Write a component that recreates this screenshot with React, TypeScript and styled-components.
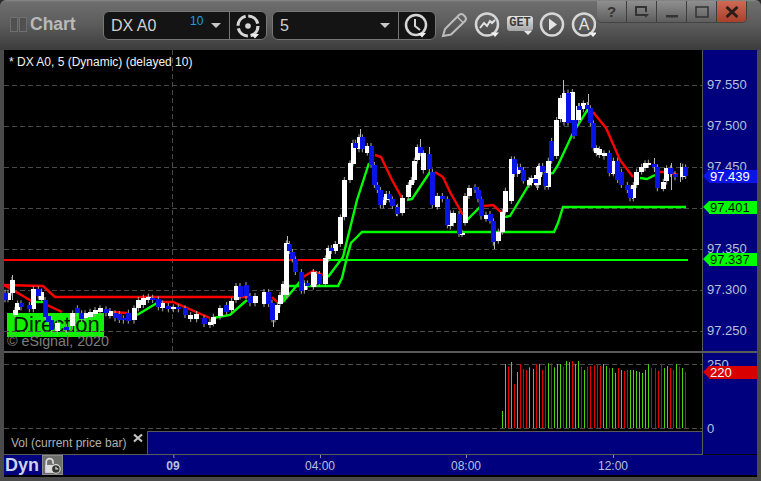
import styled, { createGlobalStyle } from "styled-components";

const GlobalStyle = createGlobalStyle`
  html, body {
    margin: 0;
    padding: 0;
    background: #2b2b2b;
    overflow: hidden;
  }
`;

const Window = styled.div`
  width: 761px;
  height: 481px;
  box-sizing: border-box;
  display: flex;
  flex-direction: column;
  padding: 0 4px 4px;
  border-radius: 6px 6px 0 0;
  background: #4a4a4a;
  font-family: "Liberation Sans", Arial, sans-serif;
  overflow: hidden;
`;

const TitleBar = styled.div`
  position: relative;
  height: 50px;
  flex: none;
  margin: 0 -4px;
  padding: 11px 0 0 10px;
  box-sizing: border-box;
  display: flex;
  align-items: flex-start;
  background: linear-gradient(#8a8a8a 0, #6e6e6e 2px, #5c5c5c 24px, #3c3c3c 50px);
`;

const Grip = styled.div`
  display: flex;
  gap: 1px;
  margin: 6px 3px 0 0;
`;

const GripBar = styled.div`
  width: 6px;
  height: 13px;
  border: 1px solid #6f6f6f;
  background: #505050;
`;

const Title = styled.div`
  width: 73px;
  margin-top: 3px;
  font-size: 17.5px;
  line-height: 20px;
  font-weight: bold;
  color: #b9b9b9;
`;

const Combo = styled.div`
  width: 164px;
  height: 29px;
  box-sizing: border-box;
  margin-right: 5px;
  display: flex;
  align-items: stretch;
  background: #141414;
  border: 1px solid #777;
  border-radius: 6px;
`;

const ComboField = styled.div`
  position: relative;
  width: 126px;
  flex: none;
  padding-left: 7px;
  box-sizing: border-box;
  font-size: 16px;
  line-height: 27px;
  color: #d0d0d0;
  border-right: 1px solid #777;
`;

const Delay = styled.span`
  position: absolute;
  left: 86px;
  top: -4px;
  font-size: 12px;
  color: #1d9be8;
`;

const Caret = styled.span`
  position: absolute;
  right: 8px;
  top: 11px;
  border-left: 5px solid transparent;
  border-right: 5px solid transparent;
  border-top: 5px solid #c8c8c8;
`;

const ComboIcon = styled.div`
  flex: 1;
  display: flex;
  align-items: center;
  justify-content: center;
`;

const Tools = styled.div`
  display: flex;
  gap: 6px;
  margin-left: 0;
  padding-top: 1px;
`;

const GetBox = styled.div`
  position: relative;
  width: 26px;
  height: 26px;
`;

const GetLabel = styled.div`
  position: absolute;
  left: 0;
  top: 4px;
  width: 26px;
  height: 15px;
  border-radius: 3px;
  background: linear-gradient(#e4e4e4, #a4a4a4);
  color: #3c3c3c;
  font-family: "Liberation Mono", monospace;
  font-size: 12px;
  font-weight: bold;
  line-height: 15px;
  text-align: center;
`;

const GetCaret = styled.span`
  position: absolute;
  left: 17px;
  top: 19px;
  border-left: 4px solid transparent;
  border-right: 4px solid transparent;
  border-top: 4px solid #e8e8e8;
`;

const WindowButtons = styled.div`
  position: absolute;
  left: 597px;
  top: 1px;
  display: flex;
  height: 21px;
  border-radius: 0 0 5px 5px;
  overflow: hidden;
  box-shadow: 0 1px 0 #444;
`;

const WindowButton = styled.div<{ $close?: boolean }>`
  width: 30px;
  box-sizing: border-box;
  display: flex;
  align-items: center;
  justify-content: center;
  border-right: 1px solid #3e3e3e;
  background: ${({ $close }) =>
    $close
      ? "linear-gradient(#cf6a55, #a8402c)"
      : "linear-gradient(#8f8f8f, #5e5e5e)"};
  color: #333;
  font-size: 15px;
  font-weight: bold;
`;

const Board = styled.div`
  flex: 1;
  display: grid;
  grid-template-columns: 698px 1px 54px;
  grid-template-rows: 301px 2px 78px 23px 1px 20px;
  background: #000;
`;

const Pane = styled.div<{ $row: string }>`
  position: relative;
  grid-column: 1;
  grid-row: ${({ $row }) => $row};
  background: #000;
  overflow: hidden;
`;

const PaneSvg = styled.svg`
  position: relative;
  display: block;
`;

const Header = styled.div`
  position: absolute;
  left: 5px;
  top: 5px;
  font-size: 12px;
  line-height: 14px;
  color: #f2f2f2;
`;

const DirectionTag = styled.div`
  position: absolute;
  left: 3px;
  top: 263px;
  width: 97px;
  height: 24px;
  padding-left: 6px;
  box-sizing: border-box;
  background: #10f000;
  color: #021502;
  font-size: 22px;
  line-height: 24px;
`;

const Copyright = styled.div`
  position: absolute;
  left: 3px;
  top: 283px;
  font-size: 14.3px;
  line-height: 16px;
  color: #7d7d7d;
`;

const AxisRule = styled.div<{ $row: string }>`
  grid-column: 2;
  grid-row: ${({ $row }) => $row};
  background: #5a5a5a;
`;

const Axis = styled.div<{ $row: string }>`
  position: relative;
  grid-column: 3;
  grid-row: ${({ $row }) => $row};
  background: #00007f;
  overflow: hidden;
`;

const Divider = styled.div`
  grid-column: 1 / 4;
  grid-row: 2;
  background: #5a5a5a;
`;

const AxisTick = styled.div.attrs<{ $y: number }>(({ $y }) => ({
  style: { top: $y },
}))<{ $y: number }>`
  position: absolute;
  left: 4px;
  font-size: 13px;
  line-height: 14px;
  color: #b7c0dc;
`;

const Badge = styled.div.attrs<{ $y: number }>(({ $y }) => ({
  style: { top: $y },
}))<{ $y: number; $bg: string; $fg: string }>`
  position: absolute;
  left: 6px;
  right: 0;
  height: 13px;
  padding-left: 0;
  background: ${({ $bg }) => $bg};
  color: ${({ $fg }) => $fg};
  font-size: 13px;
  line-height: 13px;
  text-indent: 1px;

  &::before {
    content: "";
    position: absolute;
    left: -6px;
    top: 0;
    border-top: 6.5px solid transparent;
    border-bottom: 6.5px solid transparent;
    border-right: 6px solid ${({ $bg }) => $bg};
  }
`;

const LegendRow = styled.div`
  grid-column: 1;
  grid-row: 4;
  display: flex;
`;

const Legend = styled.div`
  position: relative;
  width: 143px;
  flex: none;
  padding-left: 7px;
  box-sizing: border-box;
  background: #000;
  font-size: 12px;
  line-height: 24px;
  color: #b0b0b0;
`;

const LegendClose = styled.span`
  position: absolute;
  left: 129px;
  top: 2px;
  display: flex;
`;

const LegendFill = styled.div`
  flex: 1;
  background: #00007f;
  border-top: 1px solid #5a5a5a;
  border-left: 1px solid #5a5a5a;
`;

const HRule = styled.div`
  grid-column: 1 / 3;
  grid-row: 5;
  background: #5a5a5a;
`;

const TimeAxis = styled.div`
  position: relative;
  grid-column: 1 / 4;
  grid-row: 6;
  display: flex;
  align-items: center;
  background: #00007f;
`;

const Dyn = styled.div`
  width: 38px;
  padding-left: 1px;
  box-sizing: border-box;
  font-size: 18px;
  font-weight: bold;
  line-height: 20px;
  color: #ccd2ea;
`;

const LockButton = styled.div`
  width: 21px;
  height: 20px;
  display: flex;
  align-items: center;
  justify-content: center;
  background: #6e6e6e;
  border: 1px solid #8a8a8a;
  box-sizing: border-box;
`;

const TimeLabel = styled.div.attrs<{ $x: number }>(({ $x }) => ({
  style: { left: $x },
}))<{ $x: number; $bold?: boolean }>`
  position: absolute;
  top: 4px;
  transform: translateX(-50%);
  font-size: 12px;
  line-height: 14px;
  font-weight: ${({ $bold }) => ($bold ? "bold" : "normal")};
  color: #b7c0dc;

  &::before {
    content: "";
    position: absolute;
    left: 50%;
    top: -4px;
    width: 1px;
    height: 3px;
    background: #8a8fa8;
  }
`;

type Candle = [number, number, number, "w" | "b"];

// body centre, top, bottom read off the 3x crops, one list per crop
const leftCandles: Candle[] = [
  [15,128,148,"b"],[24,128,148,"w"],[36,90,128,"w"],[45,180,195,"w"],[53,160,180,"w"],[63,160,172,"b"],[88,165,178,"b"],
  [100,118,178,"w"],[115,118,140,"b"],[125,125,150,"w"],[135,150,200,"b"],[144,198,215,"b"],[155,210,240,"b"],
  [172,220,245,"w"],[200,230,240,"b"],[218,190,230,"w"],[232,175,190,"b"],[245,190,207,"b"],[255,190,205,"w"],
  [270,185,200,"w"],[285,180,192,"w"],[300,175,187,"w"],[318,178,190,"b"],[330,183,197,"w"],[345,190,205,"b"],
  [358,192,210,"b"],[370,205,212,"b"],[385,188,212,"b"],[402,175,212,"w"],[415,150,175,"w"],[430,143,165,"w"],
  [445,140,150,"w"],[458,143,150,"b"],[475,148,172,"b"],[488,160,175,"w"],[505,168,178,"b"],[520,172,178,"w"],
  [535,172,178,"b"],[555,175,195,"b"],[572,195,207,"w"],[590,192,208,"w"],[612,205,222,"b"],[630,215,225,"w"],
  [640,200,220,"w"],[660,175,200,"w"],[680,165,185,"b"],[695,152,180,"w"],[708,108,150,"w"],[720,108,140,"b"],
  [738,105,138,"b"],[750,138,160,"b"],[765,138,160,"w"],
];

const midCandles: Candle[] = [
  [12,516,552,"w"],[26,516,552,"b"],[36,548,598,"b"],[45,578,598,"w"],[52,555,578,"w"],[60,525,552,"w"],[69,492,525,"w"],
  [79,370,525,"w"],[88,372,393,"b"],[97,396,418,"b"],[106,418,456,"b"],[124,456,512,"b"],[133,490,512,"w"],[142,490,500,"b"],
  [160,456,500,"w"],[169,462,492,"w"],[178,462,492,"b"],[196,415,492,"w"],[205,385,418,"w"],[214,384,393,"b"],[226,372,393,"w"],
  [241,292,372,"w"],[253,180,292,"w"],[270,130,180,"w"],[279,68,130,"w"],[286,68,84,"b"],[297,52,88,"w"],[307,52,88,"b"],
  [322,78,98,"w"],[333,78,135,"b"],[343,135,195,"b"],[352,195,210,"b"],[361,210,256,"b"],[370,240,256,"w"],[379,222,240,"w"],
  [388,222,238,"b"],[397,238,258,"b"],[412,260,280,"b"],[427,234,278,"w"],[445,195,230,"w"],[454,180,195,"w"],[463,122,180,"w"],
  [472,82,122,"w"],[481,82,100,"b"],[490,100,152,"w"],[508,102,148,"b"],[517,155,255,"b"],[532,228,260,"w"],[547,228,238,"b"],
  [562,238,316,"b"],[571,280,320,"w"],[580,280,310,"w"],[597,282,342,"b"],[606,338,342,"w"],[615,228,308,"w"],[627,204,228,"w"],
  [645,202,210,"b"],[654,210,238,"b"],[663,238,290,"b"],[678,284,296,"w"],[690,282,302,"b"],[700,304,368,"b"],[715,335,362,"w"],
  [727,275,335,"w"],[736,212,275,"w"],[754,118,243,"w"],[763,118,162,"b"],[772,140,162,"w"],[781,140,150,"b"],[790,150,182,"b"],
  [807,180,195,"w"],[826,178,190,"b"],[836,140,195,"w"],
];

const rightCandles: Candle[] = [
  [4,325,340,"w"],[20,315,345,"w"],[28,288,320,"w"],[38,288,305,"b"],[45,310,350,"b"],[55,272,350,"w"],[65,213,272,"b"],
  [80,150,258,"w"],[92,84,148,"w"],[102,70,158,"w"],[114,68,158,"b"],[127,66,150,"w"],[132,150,198,"b"],[146,108,150,"w"],
  [148,108,120,"b"],[160,100,118,"w"],[172,105,118,"b"],[181,115,160,"b"],[190,160,235,"b"],[199,235,250,"w"],[208,238,255,"w"],
  [222,250,260,"w"],[238,250,310,"b"],[250,272,310,"w"],[263,272,330,"b"],[274,305,345,"b"],[292,345,360,"b"],[300,358,385,"b"],
  [310,345,385,"w"],[320,305,345,"w"],[335,290,305,"w"],[345,280,295,"w"],[355,278,285,"w"],[373,282,292,"b"],[382,292,355,"b"],
  [400,335,355,"w"],[410,295,335,"w"],[422,295,312,"b"],[435,312,322,"b"],[458,290,320,"w"],[467,292,318,"b"],
];

const candles = [
  ...leftCandles.map(([x, t, b, c]) => [x / 3, 250 + t / 3, 250 + b / 3, c] as const),
  ...midCandles.map(([x, t, b, c]) => [260 + x / 3, 120 + t / 3, 120 + b / 3, c] as const),
  ...rightCandles.map(([x, t, b, c]) => [530 + x / 3, 70 + t / 3, 70 + b / 3, c] as const),
];

// blue bodies sit on top of the white ones in the reference
const orderedCandles = [...candles.filter((c) => c[3] === "w"), ...candles.filter((c) => c[3] === "b")];

const longWicks = [
  [12, 275, 300], [287, 236, 250], [360, 129, 145], [420, 139, 150], [429, 147, 165], [563, 80, 100],
  [588, 94, 110], [632, 190, 199], [494, 240, 249], [396, 205, 216], [273, 315, 327], [537, 180, 190],
  [654, 158, 172], [671, 163, 190], [680, 163, 182],
];

const redLines = [
  "4,285 43,286 55,297 250,297",
  "4,285 18,293 33,302",
  "47,305 62,312",
  "112,312 127,313",
  "157,302 173,302 210,318",
  "272,297 277,302",
  "303,277 313,271 323,275",
  "375,155 381,157 392,180 402,198",
  "435,172 443,177 450,192 463,215",
  "484,206 493,205 502,213",
  "593,112 606,128 620,160 633,177",
  "660,172 668,172 678,175",
];

const greenLines = [
  "35,302 43,302",
  "137,315 157,303",
  "213,318 230,315 247,300",
  "283,302 288,286 338,286 342,278 347,257 351,243 356,238 362,232 554,232 558,223 563,207 686,207",
  "283,302 303,278",
  "328,277 343,257 357,200 369,163",
  "407,200 412,199 430,172",
  "465,222 480,207",
  "505,217 510,216 530,183",
  "545,175 553,173 558,165 572,135 578,125 588,109",
  "640,178 647,179 655,175",
];

const priceGrid = [85, 126, 167, 208, 249, 290, 331];

const volumes: [number, "g" | "r"][] = [
  [183,"g"],[42,"g"],[50,"r"],[36,"g"],[102,"r"],[66,"g"],[42,"r"],[57,"r"],[60,"r"],[52,"g"],[57,"g"],[42,"r"],[42,"g"],
  [60,"r"],[48,"r"],[40,"g"],[40,"r"],[52,"g"],[42,"g"],[42,"g"],[50,"r"],[33,"g"],[36,"g"],[33,"r"],[42,"g"],[33,"g"],
  [50,"r"],[60,"g"],[50,"r"],[48,"r"],[46,"r"],[44,"r"],[48,"r"],[42,"g"],[48,"g"],[54,"r"],[54,"g"],[69,"g"],[54,"r"],
  [60,"g"],[63,"r"],[60,"r"],[60,"g"],[60,"g"],[63,"g"],[66,"g"],[69,"g"],[60,"g"],[42,"g"],[54,"r"],[54,"r"],[63,"r"],
  [42,"r"],[54,"g"],[48,"g"],[54,"r"],[60,"r"],[42,"g"],[50,"r"],[54,"g"],[66,"r"],
];

const PriceChart = () => (
  <PaneSvg width={698} height={301} viewBox="4 50 698 301">
    {priceGrid.map((y) => (
      <line key={y} x1={4} x2={702} y1={y + 0.5} y2={y + 0.5} stroke="#4a4a4a" strokeDasharray="5 3" />
    ))}
    <line x1={172.5} x2={172.5} y1={50} y2={351} stroke="#4a4a4a" strokeDasharray="5 3" />
    <line x1={4} x2={323} y1={260} y2={260} stroke="#ff0000" strokeWidth={2} />
    <line x1={323} x2={688} y1={260} y2={260} stroke="#00ff00" strokeWidth={2} />
    {redLines.map((p) => (
      <polyline key={p} points={p} fill="none" stroke="#ff0000" strokeWidth={2.4} />
    ))}
    {greenLines.map((p) => (
      <polyline key={p} points={p} fill="none" stroke="#00ff00" strokeWidth={2.4} />
    ))}
    {longWicks.map(([x, a, b]) => (
      <line key={x} x1={x + 0.5} x2={x + 0.5} y1={a} y2={b} stroke="#bbb" />
    ))}
    {candles.map(([x, t, b], i) => (
      <line key={i} x1={x} x2={x} y1={t - 3} y2={b + 3} stroke="#aaa" />
    ))}
    {orderedCandles.map(([x, t, b, c], i) => (
      <rect
        key={i}
        x={Math.round(x - 2.5)}
        y={Math.round(t)}
        width={5}
        height={Math.max(2, Math.round(b - t))}
        fill={c === "w" ? "#ffffff" : "#0a14e6"}
      />
    ))}
  </PaneSvg>
);

const VolumeChart = () => (
  <PaneSvg width={698} height={78} viewBox="4 353 698 78">
    <line x1={4} x2={702} y1={364.5} y2={364.5} stroke="#4a4a4a" strokeDasharray="5 3" />
    <line x1={4} x2={702} y1={428.5} y2={428.5} stroke="#4a4a4a" strokeDasharray="5 3" />
    {volumes.map(([top, c], i) => {
      const x = Math.round(502 + i * 3.05);
      const y = 350 + top / 3;
      return <rect key={i} x={x} y={y} width={1} height={428 - y} fill={c === "g" ? "#4cd40a" : "#e00000"} />;
    })}
  </PaneSvg>
);

const ring = { fill: "none", stroke: "#d6d6d6", strokeWidth: 2.5 };

const SmallCaret = ({ x, y }: { x: number; y: number }) => (
  <path d={`M${x} ${y}h8l-4 4.5z`} fill="#f0f0f0" />
);

const GearIcon = () => (
  <svg width={26} height={26} viewBox="0 0 26 26">
    <circle cx={13} cy={13} r={10} fill="none" stroke="#d6d6d6" strokeWidth={3.2} strokeDasharray="13 2.7" />
    <circle cx={13} cy={13} r={2.8} fill="#d6d6d6" />
    <SmallCaret x={16} y={21} />
  </svg>
);

const ClockIcon = () => (
  <svg width={26} height={26} viewBox="0 0 26 26">
    <circle cx={12} cy={12} r={10} {...ring} />
    <path d="M11 6v7l5 4" fill="none" stroke="#d6d6d6" strokeWidth={2} />
    <SmallCaret x={14} y={20} />
  </svg>
);

const PencilIcon = () => (
  <svg width={27} height={26} viewBox="0 0 27 26">
    <path
      d="M2 24l2-7L18 3c1.5-1.3 3-1.3 4.5 0l1.5 1.5c1.3 1.5 1.3 3 0 4.5L10 22.5z"
      fill="none"
      stroke="#bdbdbd"
      strokeWidth={2}
    />
    <path d="M16.5 5l6 6" stroke="#bdbdbd" strokeWidth={1.5} />
  </svg>
);

const TrendIcon = () => (
  <svg width={27} height={26} viewBox="0 0 27 26">
    <circle cx={13} cy={12.5} r={11} {...ring} />
    <path d="M6 16l4-5 3 3 3-5 2 2 3-3" fill="none" stroke="#e4e4e4" strokeWidth={2} />
    <SmallCaret x={17} y={20.5} />
  </svg>
);

const PlayIcon = () => (
  <svg width={26} height={26} viewBox="0 0 26 26">
    <circle cx={13} cy={12.5} r={11} {...ring} />
    <path d="M10 6.5l8 6-8 6z" fill="#e4e4e4" />
  </svg>
);

const AlertIcon = () => (
  <svg width={25} height={26} viewBox="0 0 25 26">
    <circle cx={13} cy={12.5} r={11} {...ring} />
    <text x={13} y={18} textAnchor="middle" fontSize={16} fontFamily="Liberation Sans" fill="#e4e4e4">
      A
    </text>
    <SmallCaret x={18} y={20.5} />
  </svg>
);

const LockIcon = () => (
  <svg width={17} height={17} viewBox="0 0 15 15">
    <path d="M2 8V4.5a3 3 0 0 1 6 0V6" fill="none" stroke="#ddd" strokeWidth={1.5} />
    <rect x={1} y={7} width={7} height={7} fill="#ddd" />
    <circle cx={10.5} cy={10.5} r={3.8} fill="#333" stroke="#ddd" />
    <path d="M10.5 8.5v2h2" fill="none" stroke="#ddd" />
  </svg>
);

export default function App() {
  return (
    <Window>
      <GlobalStyle />
      <TitleBar>
        <Grip>
          <GripBar />
          <GripBar />
        </Grip>
        <Title>Chart</Title>
        <Combo>
          <ComboField>
            DX A0
            <Delay>10</Delay>
            <Caret />
          </ComboField>
          <ComboIcon>
            <GearIcon />
          </ComboIcon>
        </Combo>
        <Combo>
          <ComboField>
            5
            <Caret />
          </ComboField>
          <ComboIcon>
            <ClockIcon />
          </ComboIcon>
        </Combo>
        <Tools>
          <PencilIcon />
          <TrendIcon />
          <GetBox>
            <GetLabel>GET</GetLabel>
            <GetCaret />
          </GetBox>
          <PlayIcon />
          <AlertIcon />
        </Tools>
        <WindowButtons>
          <WindowButton>?</WindowButton>
          <WindowButton>
            <svg width={16} height={14} viewBox="0 0 16 14">
              <path d="M11 10H2V2h10v5" fill="none" stroke="#333" strokeWidth={2} />
              <path d="M9 9h6l-3 3.5z" fill="#333" />
            </svg>
          </WindowButton>
          <WindowButton>
            <svg width={14} height={14} viewBox="0 0 14 14">
              <rect x={1} y={10} width={12} height={2.5} fill="#333" />
            </svg>
          </WindowButton>
          <WindowButton>
            <svg width={14} height={14} viewBox="0 0 14 14">
              <rect x={1} y={2} width={12} height={10} fill="none" stroke="#333" strokeWidth={1.5} />
            </svg>
          </WindowButton>
          <WindowButton $close>
            <svg width={14} height={12} viewBox="0 0 14 12">
              <path d="M1.5 1l11 10M12.5 1l-11 10" stroke="#2e1c18" strokeWidth={3} />
            </svg>
          </WindowButton>
        </WindowButtons>
      </TitleBar>

      <Board>
        <Pane $row="1">
          <Header>* DX A0, 5 (Dynamic) (delayed 10)</Header>
          <DirectionTag>Direction</DirectionTag>
          <Copyright>© eSignal, 2020</Copyright>
          <PriceChart />
        </Pane>
        <AxisRule $row="1" />
        <Axis $row="1">
          {["97.550", "97.500", "97.450", "97.400", "97.350", "97.300", "97.250"].map((p, i) =>
            p === "97.400" ? null : (
              <AxisTick key={p} $y={28 + i * 41}>
                {p}
              </AxisTick>
            )
          )}
          <Badge $y={120} $bg="#0a14e6" $fg="#ffffff">97.439</Badge>
          <Badge $y={151} $bg="#00ff00" $fg="#021502">97.401</Badge>
          <Badge $y={203} $bg="#00ff00" $fg="#021502">97.337</Badge>
        </Axis>

        <Divider />

        <Pane $row="3">
          <VolumeChart />
        </Pane>
        <AxisRule $row="3 / 5" />
        <Axis $row="3 / 5">
          <AxisTick $y={5}>250</AxisTick>
          <AxisTick $y={69}>0</AxisTick>
          <Badge $y={13} $bg="#d80000" $fg="#ffffff">220</Badge>
        </Axis>

        <LegendRow>
          <Legend>
            Vol (current price bar)
            <LegendClose>
              <svg width={10} height={10} viewBox="0 0 10 10">
                <path d="M1 1.5l8 7M9 1.5l-8 7" stroke="#c4c4c4" strokeWidth={2.2} />
              </svg>
            </LegendClose>
          </Legend>
          <LegendFill />
        </LegendRow>
        <HRule />

        <TimeAxis>
          <Dyn>Dyn</Dyn>
          <LockButton>
            <LockIcon />
          </LockButton>
          <TimeLabel $x={169} $bold>09</TimeLabel>
          <TimeLabel $x={316}>04:00</TimeLabel>
          <TimeLabel $x={462}>08:00</TimeLabel>
          <TimeLabel $x={609}>12:00</TimeLabel>
        </TimeAxis>
      </Board>
    </Window>
  );
}
